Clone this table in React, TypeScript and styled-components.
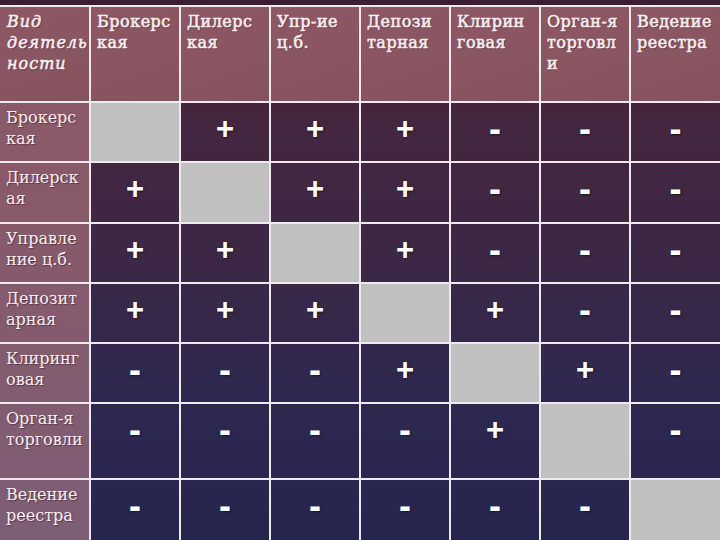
import styled, { createGlobalStyle } from "styled-components";

const GlobalStyle = createGlobalStyle`
    html, body {
        margin: 0;
        padding: 0;
        height: 100%;
        overflow: hidden;
    }
    body {
        background: linear-gradient(to bottom, #3b1c32 0%, #45263f 22%, #3b2846 50%, #2e2850 74%, #26254e 100%) fixed;
        font-family: "DejaVu Serif", "Liberation Serif", serif;
    }
`;

type Mark = "+" | "-" | "x";

interface IRow {
    label: string[];
    marks: Mark[];
};

const HEADERS: string[][] = [
    ["Брокерс", "кая"],
    ["Дилерс", "кая"],
    ["Упр-ие", "ц.б."],
    ["Депози", "тарная"],
    ["Клирин", "говая"],
    ["Орган-я", "торговл", "и"],
    ["Ведение", "реестра"],
];

const ROWS: IRow[] = [
    { label: ["Брокерс", "кая"], marks: ["x", "+", "+", "+", "-", "-", "-"] },
    { label: ["Дилерск", "ая"], marks: ["+", "x", "+", "+", "-", "-", "-"] },
    { label: ["Управле", "ние ц.б."], marks: ["+", "+", "x", "+", "-", "-", "-"] },
    { label: ["Депозит", "арная"], marks: ["+", "+", "+", "x", "+", "-", "-"] },
    { label: ["Клиринг", "овая"], marks: ["-", "-", "-", "+", "x", "+", "-"] },
    { label: ["Орган-я", "торговли"], marks: ["-", "-", "-", "-", "+", "x", "-"] },
    { label: ["Ведение", "реестра"], marks: ["-", "-", "-", "-", "-", "-", "x"] },
];

const Lines = ({ lines }: { lines: string[] }) => <>
    {lines.map((l, i) => <span key={i}>{l}{i < lines.length - 1 && <br />}</span>)}
</>;

const App = () => {
    return <>
        <GlobalStyle />
        <Page>
            <Matrix>
                <HeadCell italic>
                    <Lines lines={["Вид", "деятель", "ности"]} />
                </HeadCell>
                {HEADERS.map((h, i) => <HeadCell key={i}><Lines lines={h} /></HeadCell>)}
                {ROWS.map((row, r) => <Row key={r} row={row} />)}
            </Matrix>
        </Page>
    </>;
};

const Row = ({ row }: { row: IRow }) => <>
    <LabelCell><Lines lines={row.label} /></LabelCell>
    {row.marks.map((m, i) => m === "x"
        ? <EmptyCell key={i} />
        : <BodyCell key={i}><Sign minus={m === "-"}>{m}</Sign></BodyCell>)}
</>;

const Page = styled.div`
    width: 720px;
    height: 540px;
    padding-top: 5px;
    box-sizing: border-box;
    overflow: hidden;
`;

const Matrix = styled.div`
    display: grid;
    grid-template-columns: 89px repeat(6, 88px) 89px;
    grid-template-rows: 94px 58px 59px 58px 58px 58px 74px 62px;
    gap: 2px;
    padding-top: 2px;
    background: #eeeaee;
`;

const Cell = styled.div`
    box-sizing: border-box;
    color: #f7eff1;
    font-size: 16px;
    line-height: 21px;
    text-shadow: 1px 1px 1px rgba(40, 10, 30, 0.45);
    white-space: nowrap;
    overflow: hidden;
`;

const HeadCell = styled(Cell)<{ italic?: boolean }>`
    background: linear-gradient(160deg, #8d5864 0%, #895561 60%, #86525e 100%);
    padding: 4px 0 0 ${p => p.italic ? "7px" : "6px"};
    font-style: ${p => p.italic ? "italic" : "normal"};
    letter-spacing: ${p => p.italic ? "1px" : "0.5px"};
    -webkit-text-stroke: 0.55px #f7eff1;
`;

const LabelCell = styled(Cell)`
    background: linear-gradient(to bottom, #8d5965 0%, #865a6b 50%, #7d5e77 100%) fixed;
    padding: 4px 0 0 6px;
`;

const BodyCell = styled.div`
    background: linear-gradient(to bottom, #3b1c32 0%, #45263f 22%, #3b2846 50%, #2e2850 74%, #26254e 100%) fixed;
    display: flex;
    justify-content: center;
    align-items: flex-start;
`;

const EmptyCell = styled.div`
    background: #c0c0c0;
`;

const Sign = styled.span<{ minus?: boolean }>`
    display: block;
    height: 52px;
    line-height: 52px;
    font-family: "Liberation Sans", Arial, sans-serif;
    font-weight: 700;
    font-size: ${p => p.minus ? "36px" : "31px"};
    color: #ffffff;
    text-shadow: 1px 1px 2px rgba(0, 0, 0, 0.5);
`;

export default App;
